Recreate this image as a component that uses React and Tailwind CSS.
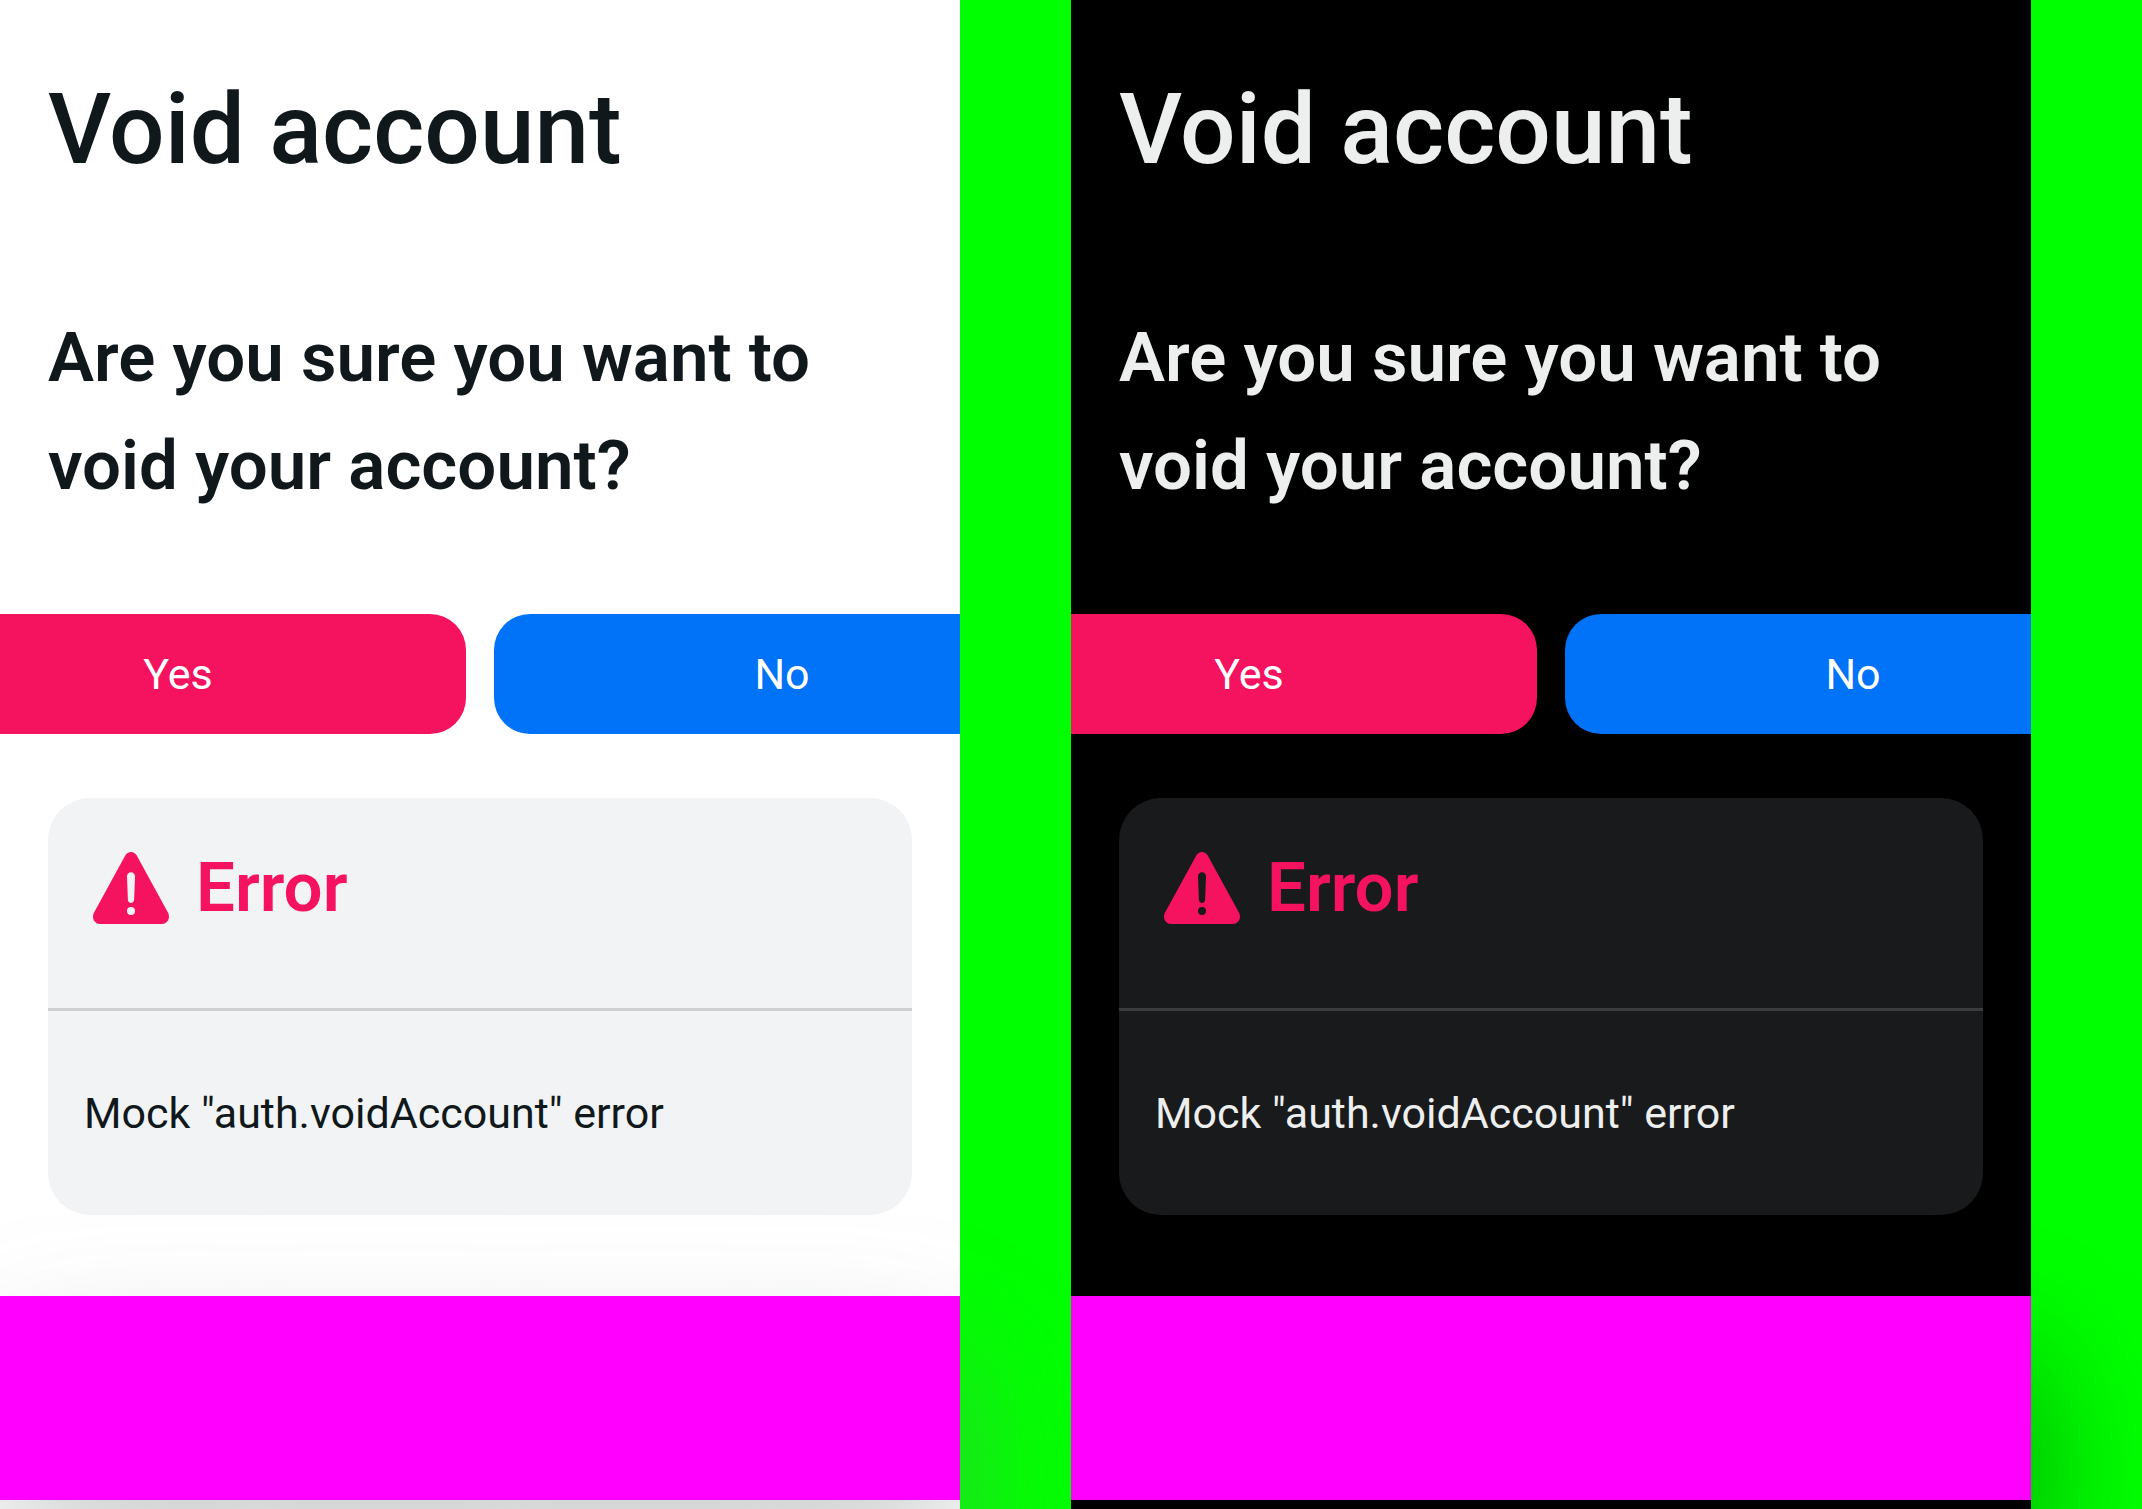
import clsx from 'clsx';

function WarningIcon() {
  return (
    <svg className="size-[94px] shrink-0" viewBox="0 0 94 94" fill="currentColor" aria-hidden="true">
      <path
        fillRule="evenodd"
        d="M47 11C49.300 11 51.500 12.300 52.600 14.300L84.200 72C86.600 77 83.500 83 78 83H16C10.500 83 7.400 77 9.800 72L41.400 14.300C42.500 12.300 44.700 11 47 11ZM47 31.300C44.700 31.300 42.900 33.100 43 35.400L43.900 58.800C44 60.600 45.300 62 47 62C48.700 62 50 60.600 50.100 58.800L51 35.400C51.100 33.100 49.300 31.300 47 31.300ZM47 66A4 4 0 1 0 47 74A4 4 0 1 0 47 66Z"
      />
    </svg>
  );
}

function Screen({ dark = false }) {
  return (
    <div className="min-h-screen overflow-hidden bg-[#00ff00] pr-[111px]">
      <main
        className={clsx(
          'flex min-h-screen flex-col pb-[9px] font-[Roboto,sans-serif]',
          dark ? 'bg-black text-[#edeeee]' : 'bg-white text-[#10181b]',
        )}
      >
        <h1 className="px-12 pt-[52px] text-[98px] leading-[156px] font-medium">Void account</h1>
        <h2 className="mt-24 px-12 text-[69px] leading-[108px] font-semibold">
          Are you sure you want to void your account?
        </h2>

        <div className="mt-[94px] flex justify-center gap-7 overflow-hidden text-[43px] text-white">
          <button type="button" className="h-[120px] w-[576px] shrink-0 rounded-[36px] bg-[#f5125f]">
            Yes
          </button>
          <button type="button" className="h-[120px] w-[576px] shrink-0 rounded-[36px] bg-[#0073f8]">
            No
          </button>
        </div>

        <section
          className={clsx('mx-12 mt-16 rounded-[42px]', dark ? 'bg-[#181a1b]' : 'bg-[#f1f3f5]')}
        >
          <div
            className={clsx(
              'border-b-[3px] px-9 pt-9 pb-[66px] text-[#f5125f]',
              dark ? 'border-[#3b3c3d]' : 'border-[#cdcfd0]',
            )}
          >
            <div className="flex h-[108px] items-center gap-[18px]">
              <WarningIcon />
              <h3 className="text-[69px] leading-[108px] font-semibold">Error</h3>
            </div>
          </div>
          <p className="px-9 py-12 text-[43px] leading-[108px]">Mock "auth.voidAccount" error</p>
        </section>

        <footer
          className={clsx(
            'mt-auto h-[204px] bg-[#ff00ff]',
            dark
              ? 'shadow-[0_72px_144px_rgba(0,0,0,0.4)]'
              : 'shadow-[0_72px_144px_rgba(131,136,136,0.4)]',
          )}
        />
      </main>
    </div>
  );
}

export default function App() {
  return (
    <div className="grid grid-cols-2">
      <Screen />
      <Screen dark />
    </div>
  );
}
